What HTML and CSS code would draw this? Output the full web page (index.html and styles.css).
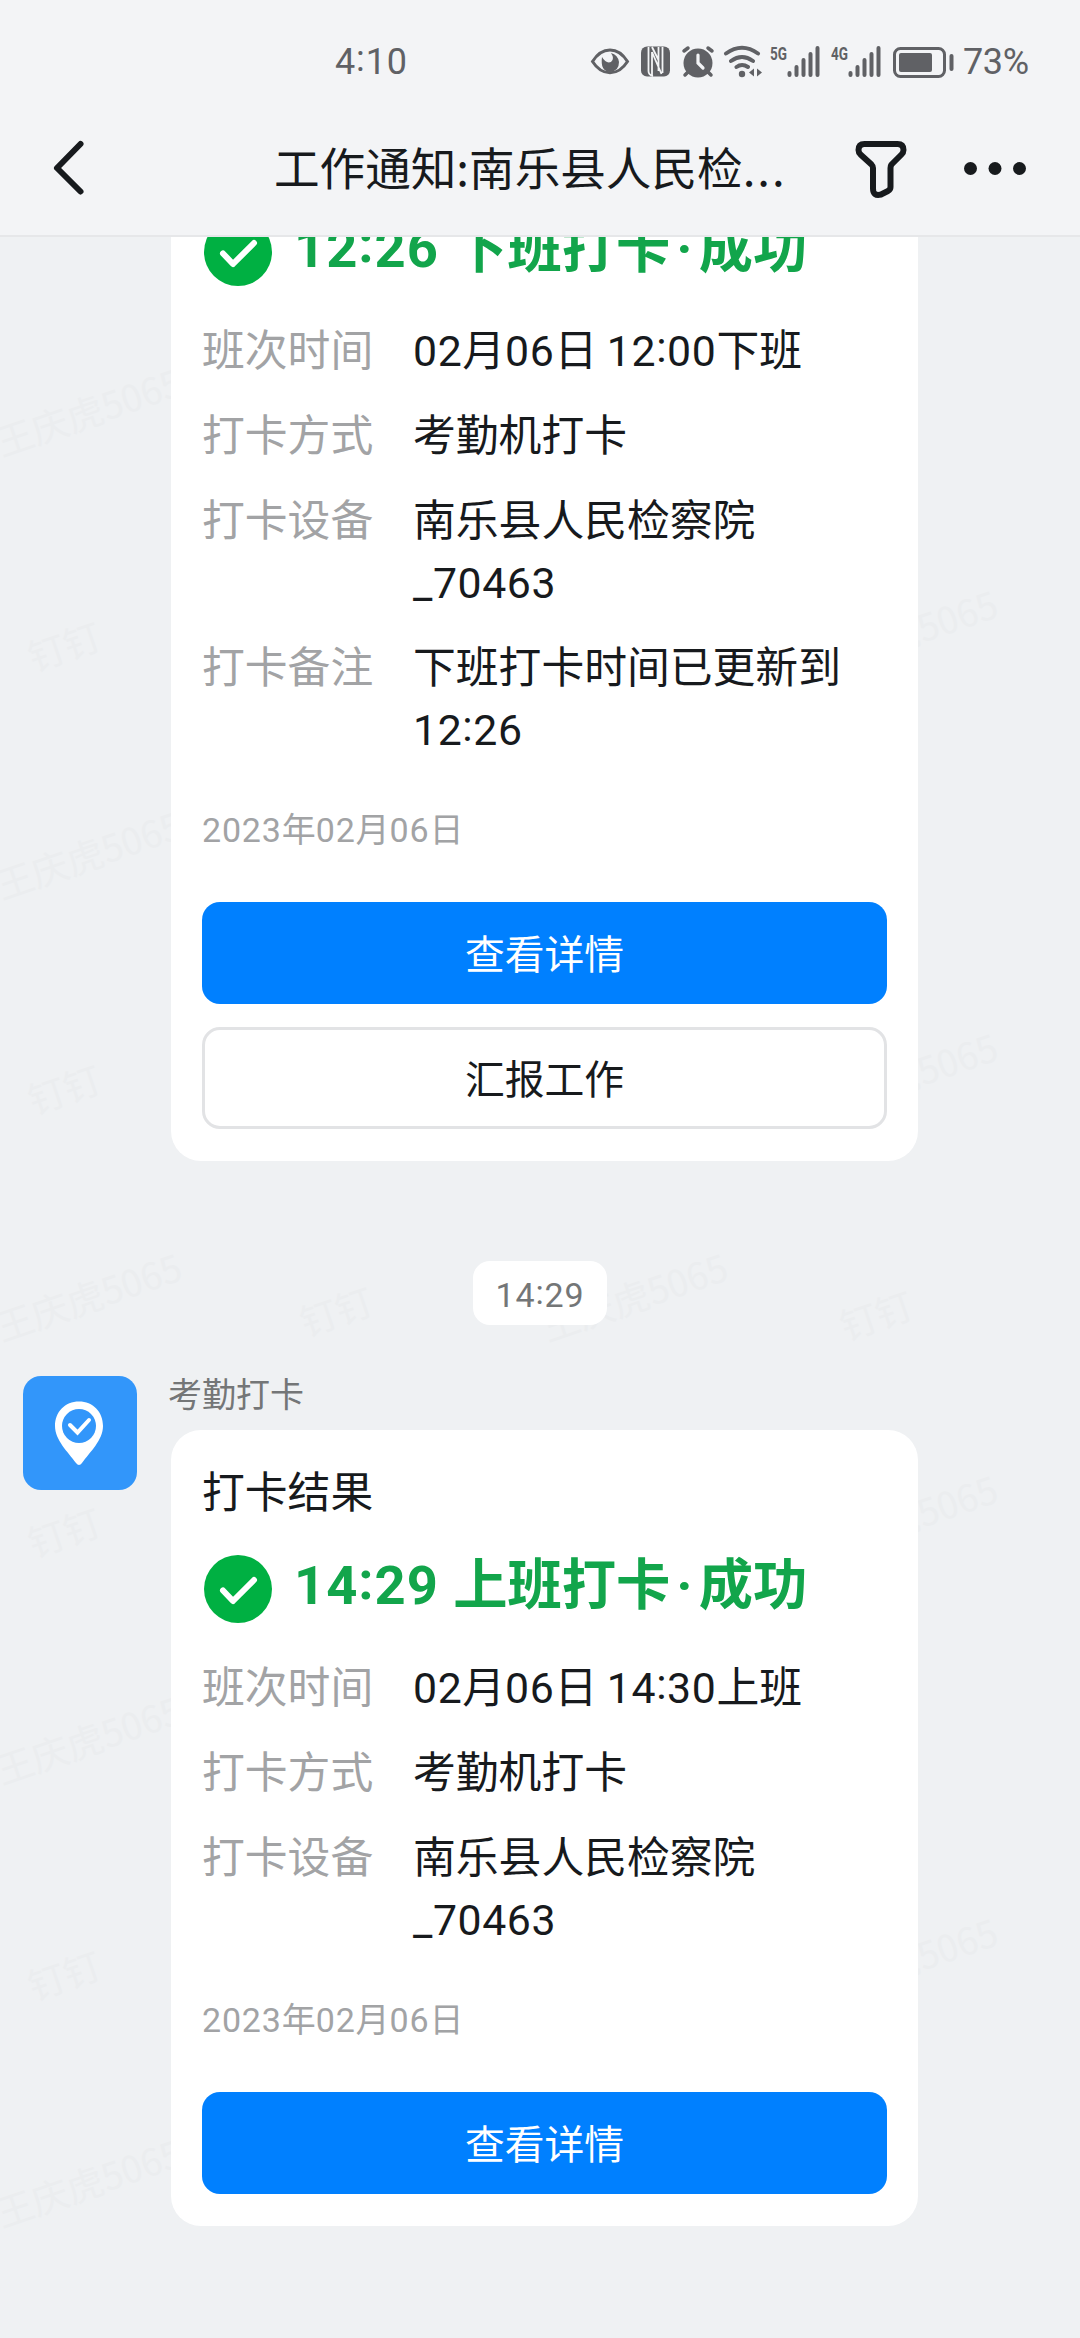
FILE: index.html
```html
<!DOCTYPE html>
<html lang="zh-CN">
<head>
<meta charset="utf-8">
<title>工作通知</title>
<link rel="stylesheet" href="styles.css">
</head>
<body>
<div class="screen">
  <header class="top">
    <div class="status">
      <span class="clock">4<span class="colon">:</span>10</span>
      <svg class="status-icons" viewBox="590 40 366 40" width="366" height="40">
        <g fill="none" stroke="#606165" stroke-width="3">
          <path d="M592.500 60.500C602 45 618 45 627.500 60.500C618 75.500 602 75.500 592.500 60.500Z"/>
          <rect x="894.500" y="47.500" width="50" height="28" rx="6"/>
        </g>
        <g fill="#606165">
          <path d="M602 56Q600 70 610 71Q619 70 619 61Q618 54 611 52Q615 58 611 61Q606 63 602 56Z"/>
          <rect x="641" y="45.500" width="29" height="30" rx="6"/>
          <circle cx="698" cy="62" r="14.500"/>
          <circle cx="742" cy="73" r="3.200"/>
          <path d="M749 71.500l5-4v8zM762 71.500l-5-4v8z"/>
          <rect x="899" y="52" width="33" height="19" rx="2"/>
          <rect x="949.500" y="53" width="4" height="17" rx="2"/>
        </g>
        <g fill="none" stroke="#f3f4f6" stroke-width="1.800">
          <path d="M648.500 46V70Q648.500 74 653 75M652 51L661.500 73M652 51V75M652 46L658.500 59M658.500 46V70M662.500 46V72"/>
          <path d="M698 54V62L703 67" stroke-width="3.200" stroke-linecap="round"/>
        </g>
        <g fill="none" stroke="#606165" stroke-width="4" stroke-linecap="round">
          <path d="M684 50L688 47M708 47L712 50M688 71L685 74M708 71L711 74" stroke-width="3.500"/>
          <path d="M726 52.500Q742 41 758 52.500M731 60Q742 52 753 60M736.500 66Q742 62 748 66"/>
          <path d="M789.500 72V74M796.500 66V74M803.500 59V74M810.500 53V74M817.500 47V74"/>
          <path d="M850.500 72V74M857.500 66V74M864.500 59V74M871.500 53V74M878.500 47V74"/>
        </g>
        <g class="network"><text x="770" y="59" textLength="17" lengthAdjust="spacingAndGlyphs">5G</text><text x="831" y="59" textLength="17" lengthAdjust="spacingAndGlyphs">4G</text></g>
      </svg>
      <span class="percent">73%</span>
    </div>
    <nav class="nav">
      <svg class="back" viewBox="0 0 40 60" width="40" height="60"><path d="M30.500 6L7 30L30.500 53.500"/></svg>
      <h1 class="nav-title">工作通知:南乐县人民检<span class="dots">...</span></h1>
      <svg class="filter" viewBox="0 0 56 60" width="56" height="60"><path d="M10.500 6H43.500Q49.500 6 49.500 12Q49.500 14.500 47.500 16.500L37.500 26.500Q36.500 28 36.500 30V49Q36.500 51.500 34 53L27 56.500Q19 58.500 19 50.500V30Q19 28 17.500 26.500L6.500 16.500Q4.500 14.500 4.500 12Q4.500 6 10.500 6Z"/></svg>
      <svg class="more" viewBox="0 0 66 20" width="66" height="20"><circle cx="8.500" cy="10.500" r="6.500"/><circle cx="33" cy="10.500" r="6.500"/><circle cx="57.500" cy="10.500" r="6.500"/></svg>
    </nav>
  </header>

  <main class="chat">
    <svg class="watermarks" viewBox="0 236 1080 2102" width="1080" height="2102">
      <defs>
        <g id="name"><text transform="rotate(-19)">王庆虎5065</text></g>
        <g id="app"><text transform="rotate(-19)">钉钉</text></g>
      </defs>
      <use href="#name" x="2" y="456"/><use href="#name" x="2" y="899"/><use href="#name" x="2" y="1341"/><use href="#name" x="2" y="1784"/><use href="#name" x="2" y="2227"/>
      <use href="#name" x="548" y="1341"/>
      <use href="#name" x="818" y="678"/><use href="#name" x="818" y="1121"/><use href="#name" x="818" y="1563"/><use href="#name" x="818" y="2006"/>
      <use href="#app" x="34" y="671"/><use href="#app" x="34" y="1114"/><use href="#app" x="34" y="1557"/><use href="#app" x="34" y="2000"/>
      <use href="#app" x="306" y="1336"/><use href="#app" x="846" y="1340"/>
    </svg>

    <section class="card card-first">
      <div class="result">
        <svg class="ok" viewBox="0 0 68 68" width="68" height="68"><circle cx="34" cy="34" r="34"/><path d="M19 35.500L29 46L50 25"/></svg>
        <span class="result-text"><span class="num">12<span class="colon">:</span>26</span> 下班打卡<span class="middot">·</span>成功</span>
      </div>
      <dl class="rows">
        <dt>班次时间</dt><dd><span class="num">02</span>月<span class="num">06</span>日 <span class="num">12<span class="colon">:</span>00</span>下班</dd>
        <dt>打卡方式</dt><dd>考勤机打卡</dd>
        <dt>打卡设备</dt><dd>南乐县人民检察院<br><span class="num">_70463</span></dd>
        <dt>打卡备注</dt><dd>下班打卡时间已更新到<br><span class="num">12<span class="colon">:</span>26</span></dd>
      </dl>
      <p class="date"><span class="num">2023</span>年<span class="num">02</span>月<span class="num">06</span>日</p>
      <div class="btn primary">查看详情</div>
      <div class="btn outline">汇报工作</div>
    </section>

    <div class="stamp"><span class="num">14<span class="colon">:</span>29</span></div>

    <section class="message">
      <svg class="avatar" viewBox="0 0 114 114" width="114" height="114">
        <rect width="114" height="114" rx="18" fill="#3296fa"/>
        <path d="M56 25.500C42 25.500 32 36 32 50C32 64 45 76 53 87Q56 91 59 87C67 76 80 64 80 50C80 36 70 25.500 56 25.500Z" fill="#fff"/>
        <circle cx="56" cy="50" r="17" fill="#3296fa"/>
        <path d="M47 49L54.500 56.500L66 44" fill="none" stroke="#fff" stroke-width="4" stroke-linecap="round"/>
      </svg>
      <div class="body">
        <div class="sender">考勤打卡</div>
        <section class="card">
          <h2 class="card-title">打卡结果</h2>
          <div class="result">
            <svg class="ok" viewBox="0 0 68 68" width="68" height="68"><circle cx="34" cy="34" r="34"/><path d="M19 35.500L29 46L50 25"/></svg>
            <span class="result-text"><span class="num">14<span class="colon">:</span>29</span> 上班打卡<span class="middot">·</span>成功</span>
          </div>
          <dl class="rows">
            <dt>班次时间</dt><dd><span class="num">02</span>月<span class="num">06</span>日 <span class="num">14<span class="colon">:</span>30</span>上班</dd>
            <dt>打卡方式</dt><dd>考勤机打卡</dd>
            <dt>打卡设备</dt><dd>南乐县人民检察院<br><span class="num">_70463</span></dd>
          </dl>
          <p class="date"><span class="num">2023</span>年<span class="num">02</span>月<span class="num">06</span>日</p>
          <div class="btn primary">查看详情</div>
        </section>
      </div>
    </section>
  </main>
</div>
</body>
</html>
```
FILE: styles.css
```css
* { box-sizing: border-box; margin: 0; padding: 0; }

body {
  background: #eff1f3;
  color: #171a1d;
  font-family: "Noto Sans CJK SC", sans-serif;
  font-size: 42.8px;
}

svg { display: block; flex: none; }

.screen {
  display: flex;
  flex-direction: column;
  width: 1080px;
  height: 2338px;
  overflow: hidden;
}

/* Latin digits; zero line-height keeps mixed-font lines at the row height */
.num, .clock, .percent {
  font-family: Roboto, "Noto Sans CJK SC", sans-serif;
  letter-spacing: 0.024em;
}
.num { line-height: 0; }
.colon { line-height: 0; vertical-align: 0.09em; }
.middot {
  padding: 0 6px;
  font-family: Roboto, sans-serif;
  line-height: 0;
}

.top {
  position: relative;
  flex: none;
  height: 237px;
  background: #f3f4f6;
  border-bottom: 2px solid #e6e7e9;
}

.status {
  display: flex;
  align-items: center;
  height: 100px;
  padding: 22px 0 0 335px;
  color: #606165;
  font-size: 36px;
  line-height: 40px;
}
.clock { width: 255px; padding-top: 2px; }
.percent { margin-left: 7px; padding-top: 2px; letter-spacing: -0.01em; }
.network { fill: #606165; font: 700 19px Roboto, sans-serif; }

.nav {
  display: flex;
  align-items: center;
  height: 136px;
  padding-left: 50px;
}
.back path, .filter path {
  fill: none;
  stroke: #171a1d;
  stroke-width: 6;
  stroke-linecap: round;
  stroke-linejoin: round;
}
.nav-title {
  width: 580px;
  margin-left: 184px;
  padding-bottom: 4px;
  font-size: 45.6px;
  font-weight: 400;
  line-height: 60px;
  white-space: nowrap;
}
.dots { letter-spacing: 2px; }
.more { margin-left: 52px; fill: #171a1d; }

.chat {
  position: relative;
  flex: 1;
  min-height: 0;
  overflow: hidden;
}
.watermarks {
  position: absolute;
  inset: 0;
  fill: #ebedef;
  font-size: 37px;
}

.card {
  position: relative;
  width: 747px;
  padding: 28px 31px 32px;
  background: #fff;
  border-radius: 30px;
}
.card-first {
  margin: -19px 0 0 171px;
  padding-top: 0;
  border-top-left-radius: 0;
  border-top-right-radius: 0;
}
.card-title { font-size: 42.8px; font-weight: 400; line-height: 62px; }

.result { display: flex; height: 68px; padding-left: 2px; }
.ok circle { fill: #00b042; }
.ok path {
  fill: none;
  stroke: #fff;
  stroke-width: 6;
  stroke-linecap: round;
  stroke-linejoin: round;
}
.result-text {
  margin-left: 22px;
  color: #12a54b;
  font-size: 54.3px;
  font-weight: 700;
  line-height: 52px;
  white-space: nowrap;
  word-spacing: 2px;
}
.result-text .num { letter-spacing: 0.018em; }
.card-title + .result { margin-top: 35px; }

.rows {
  display: grid;
  grid-template-columns: 211px 1fr;
  row-gap: 23px;
  margin-top: 30px;
  line-height: 62px;
}
.rows dt { color: #a2a3a5; }
.rows .num { letter-spacing: 0.014em; }

.date {
  margin-top: 46px;
  color: #a2a3a5;
  font-size: 34px;
  line-height: 50px;
}

.btn {
  height: 102px;
  border-radius: 18px;
  font-size: 39.8px;
  line-height: 100px;
  text-align: center;
}
.primary { margin-top: 49px; background: #0080ff; color: #fff; }
.outline { margin-top: 23px; border: 3px solid #e2e3e5; line-height: 94px; }

.stamp {
  position: relative;
  width: 134px;
  height: 64px;
  margin: 100px auto 51px;
  background: #fff;
  border-radius: 17px;
  color: #747677;
  font-size: 34px;
  line-height: 64px;
  text-align: center;
}

.message { position: relative; display: flex; padding-left: 23px; }
.body { margin-left: 34px; }
.sender {
  height: 54px;
  margin-left: -3px;
  color: #747677;
  font-size: 34px;
  line-height: 34px;
}
```
